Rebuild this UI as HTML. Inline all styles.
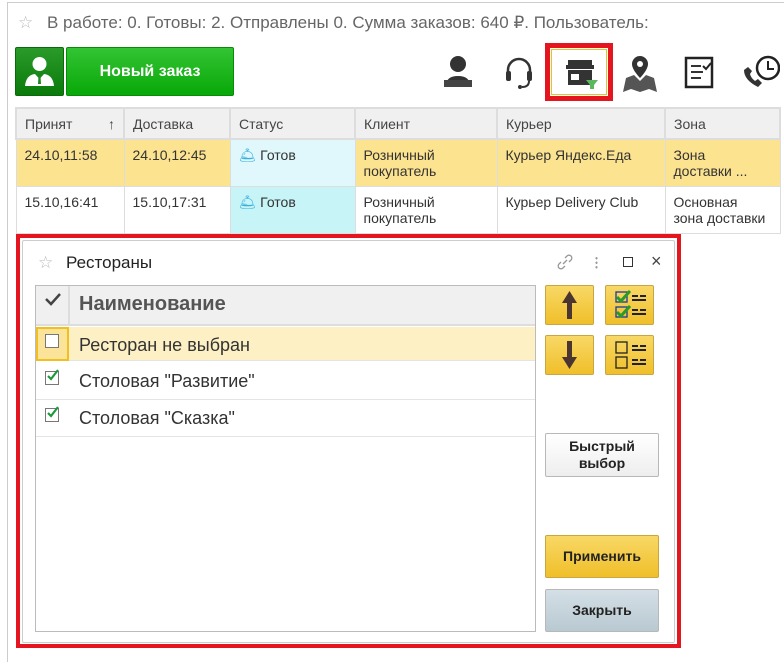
<!DOCTYPE html>
<html><head><meta charset="utf-8"><style>
*{box-sizing:border-box;margin:0;padding:0}
body{width:784px;height:652px;background:#fff;font-family:"Liberation Sans",Arial,sans-serif;position:relative;overflow:hidden;color:#333}
.a{position:absolute}
.frame{left:7px;top:2px;width:790px;height:660px;border-left:1px solid #ccc;border-top:1px solid #ccc}
table{border-collapse:collapse}
td{border:1px solid #ddd;vertical-align:top;font-size:14px;padding:7px 8px;line-height:16px}
th{border:2px solid #ddd;background:#f0f0f0;font-weight:normal;text-align:left;font-size:14px;padding:0 8px;height:31px;color:#444}
.y{background:#fce390}
.c{background:#e0f8fb}
.c2{background:#c7f4f7}
.btn{position:absolute;border:1px solid #b8b8b8;border-radius:2px;font-weight:bold;font-size:14px;text-align:center;color:#222}
.gold{background:linear-gradient(#f8d866,#f0bf2a);border-color:#c9a640}
</style></head><body>
<div class="a frame"></div>
<div class="a" style="left:18px;top:13px;font-size:17px;color:#bbb">☆</div>
<div class="a" style="left:47px;top:13px;font-size:17px;color:#666">В работе: 0. Готовы: 2. Отправлены 0. Сумма заказов: 640 ₽. Пользователь:</div>
<div class="a" style="left:15px;top:47px;width:49px;height:49px;background:linear-gradient(#2a9a2a,#0a7a0a);border:1px solid #0a6a0a;border-radius:2px">
<svg width="47" height="47" viewBox="0 0 47 47"><circle cx="23.5" cy="16" r="7" fill="#fff"/><path d="M9 38 Q10 27 19 26 L23.5 31 L28 26 Q37 27 38 38Z" fill="#fff"/><path d="M22.5 28 L24.5 28 L25 36 L22 36Z" fill="#1a8a1a"/></svg></div>
<div class="a" style="left:66px;top:47px;width:168px;height:49px;background:linear-gradient(#33c433,#08a808);border:1px solid #0a8a0a;border-radius:2px;color:#fff;font-weight:bold;font-size:16px;text-align:center;line-height:47px">Новый заказ</div>
<svg class="a" style="left:440px;top:52px" width="340" height="44" viewBox="0 0 340 44">
<g fill="#333">
<circle cx="18" cy="12" r="8"/><path d="M6 34 Q6 24 18 24 Q30 24 30 34 Z"/><rect x="4" y="28" width="28" height="7" fill="#444"/>
<path d="M68 26 v-8 a11 11 0 0 1 22 0 v8" fill="none" stroke="#333" stroke-width="2.5"/><rect x="66" y="19" width="5" height="10" rx="2"/><rect x="87" y="19" width="5" height="10" rx="2"/><path d="M89 29 q0 6 -7 6" fill="none" stroke="#333" stroke-width="2"/><circle cx="80" cy="35" r="2"/>
<rect x="128" y="8" width="24" height="5"/><path d="M126 13 h28 v4 h-28z"/><rect x="128" y="18" width="24" height="15"/><rect x="131" y="22" width="8" height="6" fill="#fff"/>
<path d="M146 28 h12 l-4 5 v4 h-4 v-4z" fill="#5cb85c"/>
<path d="M200 4 a8 8 0 0 1 8 8 c0 6 -8 14 -8 14 c0 0 -8 -8 -8 -14 a8 8 0 0 1 8 -8z"/><circle cx="200" cy="12" r="3" fill="#fff"/><path d="M186 26 l8 -3 l6 6 l6 -6 l8 3 l3 14 l-8 -3 l-9 3 l-9 -3 l-8 3z" fill="#555"/>
<rect x="246" y="6" width="26" height="29" fill="none" stroke="#222" stroke-width="2.5"/><rect x="251" y="13" width="10" height="2"/><rect x="251" y="19" width="12" height="2"/><rect x="251" y="25" width="10" height="2"/><path d="M263 14 l3 3 l5 -6" stroke="#222" stroke-width="2" fill="none"/>
<circle cx="328" cy="16" r="11" fill="none" stroke="#222" stroke-width="2.5"/><path d="M328 9 v8 h6" stroke="#222" stroke-width="2" fill="none"/><path d="M304 18 q0 10 14 17 l4 -4 l-4 -4 l-3 2 q-4 -3 -5 -7 l2 -3 l-4 -4z"/>
</g></svg>
<div class="a" style="left:545px;top:43px;width:68px;height:58px;border:5px solid #e5151f"><div style="margin:1px;height:46px;border:1px solid #f0c020"></div></div>
<table class="a" style="left:15px;top:107px;width:766px">
<tr><th style="width:108px">Принят <span style="float:right">↑</span></th><th style="width:106px">Доставка</th><th style="width:125px">Статус</th><th style="width:142px">Клиент</th><th style="width:168px">Курьер</th><th>Зона</th></tr>
<tr style="height:46px"><td class="y">24.10,11:58</td><td class="y">24.10,12:45</td><td class="c"><span style="color:#3ab0e0">🛎</span> Готов</td><td class="y">Розничный<br>покупатель</td><td class="y">Курьер Яндекс.Еда</td><td class="y">Зона<br>доставки ...</td></tr>
<tr style="height:46px"><td>15.10,16:41</td><td>15.10,17:31</td><td class="c2"><span style="color:#3ab0e0">🛎</span> Готов</td><td>Розничный<br>покупатель</td><td>Курьер Delivery Club</td><td>Основная<br>зона доставки</td></tr>
</table>
<div class="a" style="left:16px;top:234px;width:665px;height:414px;border:4px solid #e5151f;background:#fff"></div>
<div class="a" style="left:22px;top:240px;width:653px;height:403px;border:1px solid #ccc;border-radius:2px"></div>
<div class="a" style="left:38px;top:253px;font-size:17px;color:#bbb">☆</div>
<div class="a" style="left:66px;top:253px;font-size:17px;color:#222">Рестораны</div>
<svg class="a" style="left:556px;top:253px" width="18" height="18"><path d="M7 11 l4 -4 M5 9 l-2 2 a2.5 2.5 0 0 0 4 4 l2 -2 M13 9 l2 -2 a2.5 2.5 0 0 0 -4 -4 l-2 2" stroke="#999" stroke-width="1.3" fill="none"/></svg>
<div class="a" style="left:595px;top:256px;width:3px;height:13px;background:radial-gradient(circle,#999 1px,transparent 1.3px) 0 0/3px 4.5px"></div>
<div class="a" style="left:623px;top:257px;width:10px;height:10px;border:1.5px solid #333"></div>
<div class="a" style="left:651px;top:251px;font-size:18px;color:#444">×</div>
<div class="a" style="left:35px;top:285px;width:501px;height:347px;border:1px solid #bbb"></div>
<div class="a" style="left:36px;top:286px;width:499px;height:40px;background:#f0f0f0;border-bottom:2px solid #ddd"></div>
<div class="a" style="left:68px;top:286px;width:2px;height:40px;background:#ddd"></div>
<svg class="a" style="left:44px;top:292px" width="18" height="14"><path d="M2 7 l5 5 l9 -10" stroke="#444" stroke-width="2.5" fill="none"/></svg>
<div class="a" style="left:79px;top:293px;font-size:20px;font-weight:bold;color:#555">Наименование</div>
<div class="a" style="left:36px;top:327px;width:499px;height:34px;background:#fdf0c4;border-bottom:1px solid #e4e4e4"></div>
<div class="a" style="left:36px;top:327px;width:33px;height:34px;background:#fbe49a;border:2px solid #f0c020"></div>
<div class="a" style="left:45px;top:334px;width:14px;height:14px;border:1px solid #777;background:#fff"></div>
<div class="a" style="left:79px;top:335px;font-size:18px;color:#333">Ресторан не выбран</div>
<div class="a" style="left:36px;top:399px;width:499px;height:1px;background:#e4e4e4"></div>
<div class="a" style="left:36px;top:436px;width:499px;height:1px;background:#e4e4e4"></div>
<div class="a" style="left:45px;top:371px;width:14px;height:14px;border:1px solid #777"></div>
<div class="a" style="left:45px;top:408px;width:14px;height:14px;border:1px solid #777"></div>
<svg class="a" style="left:45px;top:368px" width="16" height="14"><path d="M3 8 l3 3 l7 -9" stroke="#1a9a3a" stroke-width="2.2" fill="none"/></svg>
<svg class="a" style="left:45px;top:405px" width="16" height="14"><path d="M3 8 l3 3 l7 -9" stroke="#1a9a3a" stroke-width="2.2" fill="none"/></svg>
<div class="a" style="left:79px;top:371px;font-size:18px;color:#333">Столовая "Развитие"</div>
<div class="a" style="left:79px;top:408px;font-size:18px;color:#333">Столовая "Сказка"</div>
<div class="btn gold" style="left:545px;top:285px;width:49px;height:40px"><svg width="47" height="38"><path d="M23.5 5 L16 17 h5 v16 h5 v-16 h5z" fill="#4a3530"/></svg></div>
<div class="btn gold" style="left:545px;top:335px;width:49px;height:40px"><svg width="47" height="38"><path d="M23.5 33 L16 21 h5 v-16 h5 v16 h5z" fill="#4a3530"/></svg></div>
<div class="btn gold" style="left:605px;top:285px;width:49px;height:40px"><svg width="47" height="38"><rect x="10" y="6" width="11" height="10" fill="none" stroke="#1a3aa0" stroke-width="1.3"/><rect x="10" y="21" width="11" height="10" fill="none" stroke="#1a3aa0" stroke-width="1.3"/><path d="M11 11 l4 4 l9 -10 M11 26 l4 4 l9 -10" stroke="#2a9a2a" stroke-width="3" fill="none"/><path d="M26 10h6m2 0h6M26 14h14M26 24h6m2 0h6M26 28h14" stroke="#222" stroke-width="2"/></svg></div>
<div class="btn gold" style="left:605px;top:335px;width:49px;height:40px"><svg width="47" height="38"><rect x="10" y="6" width="11" height="11" fill="none" stroke="#222" stroke-width="1.3"/><rect x="10" y="21" width="11" height="11" fill="none" stroke="#222" stroke-width="1.3"/><path d="M26 10h6m2 0h6M26 14h14M26 24h6m2 0h6M26 28h14" stroke="#222" stroke-width="2"/></svg></div>
<div class="btn" style="left:545px;top:433px;width:114px;height:44px;background:linear-gradient(#fff,#eee);line-height:17px;padding-top:4px">Быстрый<br>выбор</div>
<div class="btn gold" style="left:545px;top:535px;width:114px;height:43px;line-height:41px">Применить</div>
<div class="btn" style="left:545px;top:589px;width:114px;height:43px;line-height:41px;background:linear-gradient(#d4dfe6,#b9c9d2)">Закрыть</div>
</body></html>
